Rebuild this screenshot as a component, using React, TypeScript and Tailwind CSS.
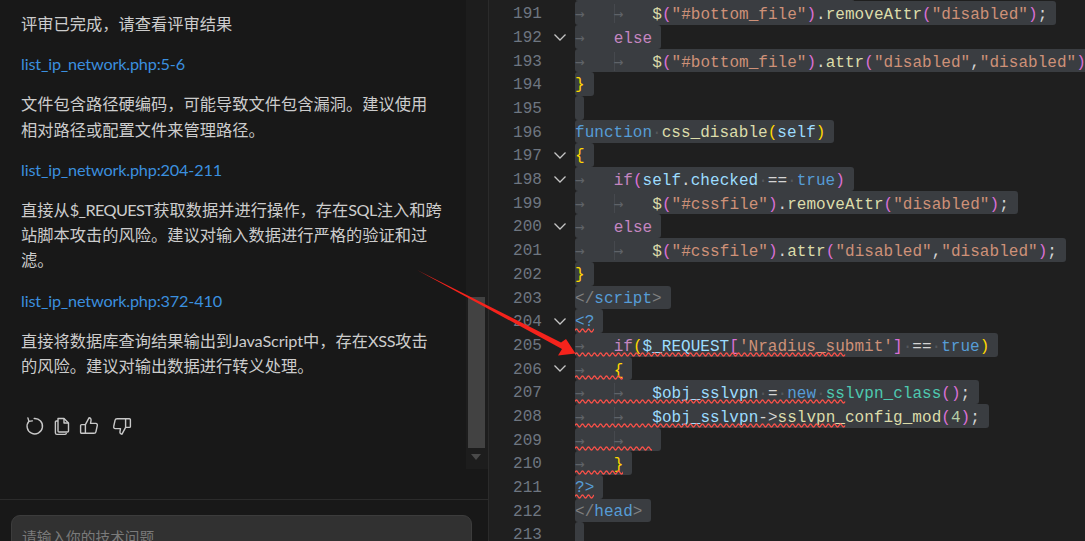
import React from "react";

const tab = "text-[#5f6368] [font-family:'DejaVu_Sans_Mono',monospace]";
const dot = "text-[#54575c]";
const fn = "text-[#dcdcaa]";
const str = "text-[#ce9178]";
const pur = "text-[#da70d6]";
const gold = "text-[#ffd700]";
const plain = "text-[#d4d4d4]";
const kw = "text-[#c586c0]";
const blue = "text-[#569cd6]";
const vr = "text-[#9cdcfe]";
const cls = "text-[#4ec9b0]";
const num = "text-[#b5cea8]";
const gray = "text-[#808080]";

type Tok = [string, string];
const T1: Tok = ["→   ", tab];
const GUIDE: Tok = ["→   ", "guide"];

type Line = { n: number; toks: Tok[]; fold?: boolean; err?: boolean };

const lines: Line[] = [
  { n: 191, toks: [T1, GUIDE, ["$", fn], ["(", pur], ['"#bottom_file"', str], [")", pur], [".", plain], ["removeAttr", fn], ["(", pur], ['"disabled"', str], [")", pur], [";", plain]] },
  { n: 192, fold: true, toks: [T1, ["else", kw]] },
  { n: 193, toks: [T1, GUIDE, ["$", fn], ["(", pur], ['"#bottom_file"', str], [")", pur], [".", plain], ["attr", fn], ["(", pur], ['"disabled"', str], [",", plain], ['"disabled"', str], [")", pur], [";", plain]] },
  { n: 194, toks: [["}", gold]] },
  { n: 195, toks: [] },
  { n: 196, toks: [["function", blue], ["·", dot], ["css_disable", fn], ["(", gold], ["self", vr], [")", gold]] },
  { n: 197, fold: true, toks: [["{", gold]] },
  { n: 198, fold: true, toks: [T1, ["if", kw], ["(", pur], ["self", vr], [".", plain], ["checked", vr], ["·", dot], ["==", plain], ["·", dot], ["true", blue], [")", pur]] },
  { n: 199, toks: [T1, GUIDE, ["$", fn], ["(", pur], ['"#cssfile"', str], [")", pur], [".", plain], ["removeAttr", fn], ["(", pur], ['"disabled"', str], [")", pur], [";", plain]] },
  { n: 200, fold: true, toks: [T1, ["else", kw]] },
  { n: 201, toks: [T1, GUIDE, ["$", fn], ["(", pur], ['"#cssfile"', str], [")", pur], [".", plain], ["attr", fn], ["(", pur], ['"disabled"', str], [",", plain], ['"disabled"', str], [")", pur], [";", plain]] },
  { n: 202, toks: [["}", gold]] },
  { n: 203, toks: [["</", gray], ["script", blue], [">", gray]] },
  { n: 204, fold: true, err: true, toks: [["<?", blue]] },
  { n: 205, err: true, toks: [T1, ["if", kw], ["(", gold], ["$_REQUEST", vr], ["[", pur], ["'Nradius_submit'", str], ["]", pur], ["·", dot], ["==", plain], ["·", dot], ["true", blue], [")", gold]] },
  { n: 206, fold: true, err: true, toks: [T1, ["{", gold]] },
  { n: 207, err: true, toks: [T1, GUIDE, ["$obj_sslvpn", vr], ["·", dot], ["=", plain], ["·", dot], ["new", blue], ["·", dot], ["sslvpn_class", cls], ["(", pur], [")", pur], [";", plain]] },
  { n: 208, err: true, toks: [T1, GUIDE, ["$obj_sslvpn", vr], ["->", plain], ["sslvpn_config_mod", fn], ["(", pur], ["4", num], [")", pur], [";", plain]] },
  { n: 209, err: true, toks: [T1, GUIDE] },
  { n: 210, err: true, toks: [T1, ["}", gold]] },
  { n: 211, err: true, toks: [["?>", blue]] },
  { n: 212, toks: [["</", gray], ["head", blue], [">", gray]] },
  { n: 213, toks: [] },
];

const wavePath = "M0 2.5" + Array.from({ length: 90 }, (_, i) => ` q1.5 ${i % 2 === 0 ? -3 : 3} 3 0`).join("");

function Squiggle() {
  return (
    <svg className="absolute left-0 bottom-0 w-full h-[5px]" preserveAspectRatio="none">
      <path d={wavePath} fill="none" stroke="#f85149" strokeWidth="1.3" />
    </svg>
  );
}

function Chevron() {
  return (
    <svg width="14" height="14" viewBox="0 0 14 14" fill="none" stroke="#c5c5c5" strokeWidth="1.3">
      <path d="M1.5 4.5 L7 10 L12.5 4.5" />
    </svg>
  );
}

function CodeRow({ line }: { line: Line }) {
  return (
    <div className="flex h-[23.7px] leading-[26.6px] whitespace-pre">
      <div className="w-[53px] shrink-0 text-right text-[#6e7681]">{line.n}</div>
      <div className="w-[33px] shrink-0 flex items-center justify-end pr-[8px]">{line.fold ? <Chevron /> : null}</div>
      <div className="h-full bg-[#3a3d41] rounded-[3px] pr-[9px]">
        <span className="relative inline-block h-full">
          {line.toks.map((t, i) =>
            t[1] === "guide" ? (
              <span key={i} className={`${tab} shadow-[inset_1px_0_0_#46494e]`}>{t[0]}</span>
            ) : (
              <span key={i} className={t[1]}>{t[0]}</span>
            )
          )}
          {line.err ? <Squiggle /> : null}
        </span>
      </div>
    </div>
  );
}

function Refresh() {
  return (
    <svg width="20" height="20" viewBox="0 0 20 20" fill="none" stroke="#c8c8c8" strokeWidth="1.4" strokeLinecap="round" strokeLinejoin="round">
      <path d="M9.2 2.5 A7.7 7.7 0 1 1 3.9 5.2" />
      <path d="M2.9 1.9 L3.9 5.4 L7.4 4.9" />
    </svg>
  );
}
function Copy() {
  return (
    <svg width="20" height="20" viewBox="0 0 20 20" fill="none" stroke="#c8c8c8" strokeWidth="1.4" strokeLinejoin="round">
      <path d="M6 2.5 H12 L16.5 7 V15 A1 1 0 0 1 15.5 16 H7 A1 1 0 0 1 6 15 Z" />
      <path d="M12 2.5 V7 H16.5" />
      <path d="M6 5 H4.4 A1 1 0 0 0 3.4 6 V17 A1.5 1.5 0 0 0 4.9 18.4 H13 A1.5 1.5 0 0 0 14.4 17" />
    </svg>
  );
}
function ThumbUp() {
  return (
    <svg width="20" height="20" viewBox="0 0 20 20" fill="none" stroke="#c8c8c8" strokeWidth="1.4" strokeLinejoin="round">
      <path d="M6.4 8.6 L10 1.8 C11.6 1.8 12.3 3 12 4.6 L11.5 7.4 H16.8 C18 7.4 18.6 8.4 18.3 9.5 L16.9 15.8 C16.7 16.8 16 17.3 15 17.3 H6.4 Z" />
      <path d="M6.4 8.6 H2.6 A1 1 0 0 0 1.6 9.6 V16.3 A1 1 0 0 0 2.6 17.3 H6.4" />
    </svg>
  );
}
function ThumbDown() {
  return (
    <svg width="20" height="20" viewBox="0 0 20 20" fill="none" stroke="#c8c8c8" strokeWidth="1.4" strokeLinejoin="round">
      <path d="M13.6 11.4 L10 18.2 C8.4 18.2 7.7 17 8 15.4 L8.5 12.6 H3.2 C2 12.6 1.4 11.6 1.7 10.5 L3.1 4.2 C3.3 3.2 4 2.7 5 2.7 H13.6 Z" />
      <path d="M13.6 11.4 H17.4 A1 1 0 0 0 18.4 10.4 V3.7 A1 1 0 0 0 17.4 2.7 H13.6" />
    </svg>
  );
}

function Link({ children }: { children: React.ReactNode }) {
  return <p className="text-[#3b8fdf] tracking-[-0.18px]">{children}</p>;
}

export default function App() {
  return (
    <div className="relative flex w-[1085px] h-[541px] overflow-hidden bg-[#1f1f1f]">
      {/* Chat panel */}
      <div className="flex flex-col w-[489px] h-full shrink-0 bg-[#181818] border-r border-[#2b2b2b] [font-family:'Lato','Noto_Sans_CJK_SC',sans-serif]">
        <div className="flex h-[469px] shrink-0">
          <div className="flex-1 pl-[21px] pr-[23.5px] pt-[11px] text-[16.25px] leading-[25.2px] text-[#cccccc] flex flex-col gap-[15px]">
            <p>评审已完成，请查看评审结果</p>
            <Link>list_ip_network.php:5-6</Link>
            <p>文件包含路径硬编码，可能导致文件包含漏洞。建议使用相对路径或配置文件来管理路径。</p>
            <Link>list_ip_network.php:204-211</Link>
            <p>直接从<span className="tracking-[-0.6px]">$_REQUEST</span>获取数据并进行操作，存在<span className="tracking-[-0.6px]">SQL</span>注入和跨站脚本攻击的风险。建议对输入数据进行严格的验证和过滤。</p>
            <Link>list_ip_network.php:372-410</Link>
            <p>直接将数据库查询结果输出到<span className="tracking-[-0.1px]">JavaScript</span>中，存在<span className="tracking-[-0.3px]">XSS</span>攻击的风险。建议对输出数据进行转义处理。</p>
            <div className="flex items-center gap-[7px] mt-[23px] pl-[4px]">
              <Refresh />
              <Copy />
              <ThumbUp />
              <span className="ml-[6px]"><ThumbDown /></span>
            </div>
          </div>
          <div className="w-[22px] shrink-0 bg-[#1d1d1d] flex flex-col items-center pt-[297px] pr-[2px]">
            <div className="w-[17px] h-[151px] bg-[#424242]" />
            <svg className="mt-[6px]" width="10" height="6" viewBox="0 0 10 6"><path d="M0 0 H10 L5 6 Z" fill="#4a4a4a" /></svg>
          </div>
        </div>
        <div className="mt-[30px] border-t border-[#2b2b2b] pt-[15px] pl-[11px] pr-[16px]">
          <div className="h-[60px] rounded-[9px] bg-[#313131] border border-[#3c3c3c] px-[10px] pt-[9px] text-[14.7px] leading-[24px] text-[#7a7a7a]">
            请输入你的技术问题
          </div>
        </div>
      </div>

      {/* Editor */}
      <div className="flex-1 min-w-0 overflow-hidden text-[16px] [font-family:'Liberation_Mono',monospace] tracking-[0.03px]">
        <div className="flex h-[23.7px] -mt-[22.4px]">
          <div className="w-[86px] shrink-0" />
          <div className="w-[280px] h-full bg-[#3a3d41] rounded-[3px]" />
        </div>
        {lines.map((l) => (
          <CodeRow key={l.n} line={l} />
        ))}
      </div>

      {/* Red annotation arrow */}
      <svg className="absolute left-0 top-0 pointer-events-none" width="1085" height="541" viewBox="0 0 1085 541">
        <path d="M417 270 L561 342.5 L566 339 L575.5 353.5 L558 355.5 L562 349 Z" fill="#f5231c" />
      </svg>
    </div>
  );
}
